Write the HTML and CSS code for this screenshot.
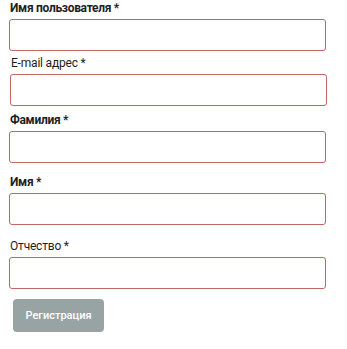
FILE: index.html
```html
<!DOCTYPE html>
<html lang="ru">
<head>
<meta charset="utf-8">
<link rel="stylesheet" href="styles.css">
</head>
<body>
<form class="form">
  <div class="field f1">
    <label class="label bold">Имя пользователя *</label>
    <input class="input" type="text">
  </div>
  <div class="field f2">
    <label class="label">E-mail адрес *</label>
    <input class="input" type="text">
  </div>
  <div class="field f3">
    <label class="label bold">Фамилия *</label>
    <input class="input" type="text">
  </div>
  <div class="field f4">
    <label class="label bold">Имя *</label>
    <input class="input" type="text">
  </div>
  <div class="field f5">
    <label class="label">Отчество *</label>
    <input class="input" type="text">
  </div>
  <button class="btn" type="button">Регистрация</button>
</form>
</body>
</html>
```

FILE: styles.css
```css
html, body {
  margin: 0;
  padding: 0;
  background: #ffffff;
}
.form {
  display: flex;
  flex-direction: column;
  padding: 1px 21px 0 9px;
  font-family: Roboto, "Liberation Sans", Arial, sans-serif;
  color: #1e1e1e;
}
.field {
  display: flex;
  flex-direction: column;
}
.label {
  font-size: 12px;
  line-height: 14px;
  height: 14px;
  padding-left: 1px;
  margin-bottom: 4px;
  font-weight: 400;
  letter-spacing: -0.2px;
}
.label.bold {
  font-weight: bold;
  letter-spacing: -0.3px;
}
.input {
  box-sizing: border-box;
  height: 32px;
  margin: 0;
  border: 1px solid #c46566;
  border-radius: 3px;
  background: #fff;
  width: 317px;
}
.f2 { margin-top: 5px; }
.f2 .label { padding-left: 2px; }
.f2 .input { margin-left: 1px; }
.f3 { margin-top: 7px; }
.f4 { margin-top: 12px; }
.f5 { margin-top: 14px; }
.btn {
  align-self: flex-start;
  margin: 10px 0 0 4px;
  width: 91px;
  height: 33px;
  border: none;
  border-radius: 4px;
  background: #98a4a4;
  color: #fff;
  font-family: Roboto, "Liberation Sans", Arial, sans-serif;
  font-weight: 500;
  font-size: 11px;
  padding: 0;
}
```
